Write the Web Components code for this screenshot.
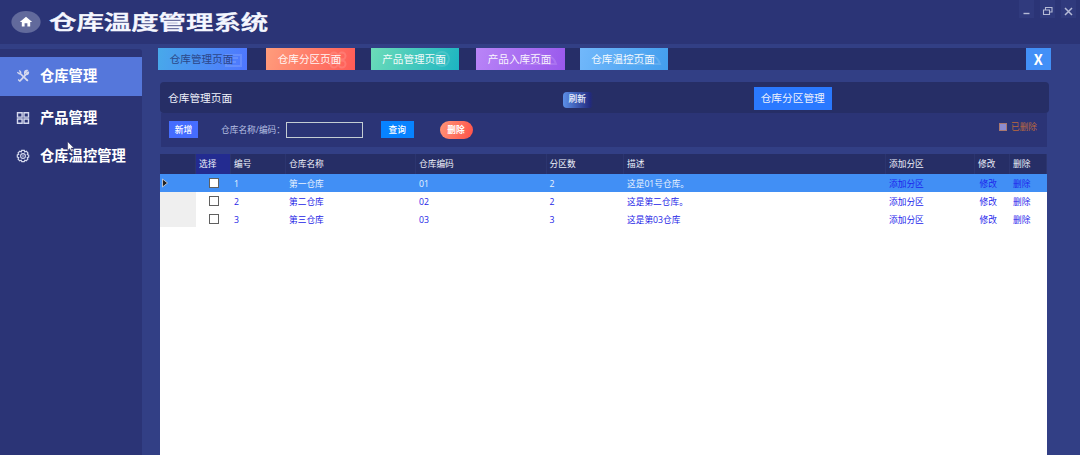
<!DOCTYPE html>
<html>
<head>
<meta charset="utf-8">
<title>仓库温度管理系统</title>
<style>
    html, body {
        margin: 0;
        height: 100%;
        overflow: hidden;
    }

    body {
        background: #323f85;
        font-family: "Open Sans", "Noto Sans CJK SC", sans-serif;
        font-size: 8.7px;
        color: #fff;
        cursor: default;
    }
</style>
</head>
<body>
<warehouse-app></warehouse-app>

<script>
const ICONS = {
    tools: `<g stroke-width="1.7" stroke-linecap="round"><path d="M4.6 4.8 11 11.2M9.4 6.2 4 11.8"/></g>
        <path d="M1.3 3.2 3.3 4.8 4.8 3.3 3.3 1.3M12.4 2.6 10.8 4.4 9.5 3.2 11.2 1.5Q8.8 1 8.6 3.3L8.7 5.2 10.7 5.5Q12.9 5 12.4 2.6M10.3 10.3 12 12M2.2 10.5 3.8 12.2" stroke-width="1.3"/>`,
    grid: `<path d="M1.5 1.8H6.1V6.1H1.5ZM8 1.8H12.5V6.1H8ZM1.5 8H6.1V12.2H1.5ZM8 8H12.5V12.2H8Z" stroke-width="1.4"/>`,
    gear: `<path d="M5.7 1.4H8.3L8.8 2.9 10.4 2.3 12 4 11.3 5.5 12.7 6.1V8L11.3 8.6 11.9 10.2 10.2 11.8 8.8 11.2 8.2 12.7H5.8L5.2 11.2 3.7 11.8 2.1 10.1 2.7 8.6 1.3 8V6L2.7 5.4 2.1 3.9 3.8 2.3 5.2 2.9Z" stroke-width="1.2"/>
        <circle cx="7" cy="7" r="2.4" stroke-width="1.1"/><circle cx="7" cy="7" r=".8" fill="currentColor" stroke="none"/>`
};

// Top bar with the logo, the system title and the window controls
class AppHeader extends HTMLElement {
    connectedCallback() {
        const shadow = this.attachShadow({mode: "open"});
        shadow.innerHTML = `
            <style>
                :host {
                    display: flex;
                    height: 44px;
                    box-sizing: border-box;
                    padding-left: 11px;
                    background: #2b3476;
                }

                .logo {
                    width: 30px;
                    height: 22px;
                    margin-top: 11px;
                }

                h1 {
                    margin: 6px auto 0 8px;
                    font: 500 20px/31px "Noto Sans CJK SC", sans-serif;
                    -webkit-text-stroke: .5px #f5f7ff;
                    color: #f5f7ff;
                    transform: scaleX(1.37);
                    transform-origin: left;
                }

                .controls {
                    display: flex;
                    gap: 6px;
                    padding-right: 4px;
                }

                .controls svg {
                    width: 15px;
                    height: 18px;
                    background: #303a7d;
                    fill: none;
                    stroke: #b5bad6;
                }
            </style>

            <svg class="logo" viewBox="0 0 30 22">
                <ellipse cx="15" cy="11" rx="14.6" ry="11" fill="#626a9c"/>
                <path d="M15 5.8 8.8 11H10.8V15.6H13.6V12.2H16.4V15.6H19.2V11H21.2Z" fill="#fff"/>
            </svg>
            <h1><slot></slot></h1>
            <div class="controls">
                <svg viewBox="0 0 15 18"><path d="M4.5 13.5H10.5" stroke-width="1.4"/></svg>
                <svg viewBox="0 0 15 18"><path d="M3.5 10H9.5V14.5H3.5ZM5.5 10V7.5H12V12H9.5" stroke-width="1.1"/></svg>
                <svg viewBox="0 0 15 18"><path d="M4 8 11 15M11 8 4 15" stroke-width="1.5"/></svg>
            </div>
        `;
    }
}

class NavItem extends HTMLElement {
    connectedCallback() {
        const shadow = this.attachShadow({mode: "open"});
        shadow.innerHTML = `
            <style>
                :host {
                    display: flex;
                    align-items: center;
                    height: 39px;
                    padding-left: 16px;
                    gap: 10px;
                    font: bold 14.3px/36px "Noto Sans CJK SC", sans-serif;
                    white-space: nowrap;
                }

                :host([active]) {
                    background: #5577db;
                }

                svg {
                    width: 14px;
                    height: 14px;
                    margin-bottom: 2px;
                    fill: none;
                    stroke: currentColor;
                    color: #d5d9ee;
                }

                span {
                    height: 39px;
                }
            </style>
            <svg viewBox="0 0 14 14">${ICONS[this.getAttribute("icon")]}</svg>
            <span><slot></slot></span>
        `;
    }
}

class SideNav extends HTMLElement {
    connectedCallback() {
        const shadow = this.attachShadow({mode: "open"});
        shadow.innerHTML = `
            <style>
                :host {
                    display: flex;
                    flex-direction: column;
                    position: relative;
                    box-sizing: border-box;
                    padding-top: 8px;
                    background: #2b3476;
                    border-radius: 0 3px 0 0;
                }

                nav-item:nth-of-type(2) {
                    margin-top: 3px;
                }

                nav-item:nth-of-type(3) {
                    margin-top: -1px;
                }

                .pointer {
                    position: absolute;
                    left: 67px;
                    top: 92px;
                    width: 8px;
                    height: 12px;
                }
            </style>
            <nav-item icon="tools" active>仓库管理</nav-item>
            <nav-item icon="grid">产品管理</nav-item>
            <nav-item icon="gear">仓库温控管理</nav-item>
            <svg class="pointer" viewBox="0 0 8 12"><path d="M.6.5V9.5L2.7 7.7 4.2 11 5.5 10.4 4.1 7.1H7Z" fill="#fff" stroke="#1c2350" stroke-width=".5"/></svg>
        `;
    }
}

class PageTab extends HTMLElement {
    connectedCallback() {
        const shadow = this.attachShadow({mode: "open"});
        const marks = {
            card: `<path d="M68 7H83V18H68ZM72 10H80M72 14H78"/>`,
            flower: `<circle cx="68" cy="8" r="3.5"/><circle cx="76" cy="8" r="3.5"/><circle cx="68" cy="16" r="3.5"/><circle cx="76" cy="16" r="3.5"/>`,
            ring: `<circle cx="71" cy="11" r="7"/><circle cx="71" cy="11" r="3"/>`,
            cloud: `<path d="M48 16Q50 7 57 10 62 2 68 9 77 6 80 16Z"/>`
        };
        shadow.innerHTML = `
            <style>
                :host {
                    display: block;
                    position: relative;
                    width: 88.5px;
                    height: 22.5px;
                    font-size: 10.6px;
                    line-height: 23px;
                    text-align: center;
                    color: #fff;
                }

                :host([active]) {
                    color: #29417f;
                }

                svg {
                    position: absolute;
                    inset: 0;
                    fill: none;
                    stroke: #fff;
                    stroke-width: 2;
                    opacity: .13;
                }

                span {
                    display: block;
                    position: relative;
                    padding-right: 1.5px;
                    opacity: .93;
                }
            </style>
            <svg viewBox="0 0 88.5 22.5">${marks[this.getAttribute("mark")]}</svg>
            <span><slot></slot></span>
        `;
    }
}

class TabStrip extends HTMLElement {
    connectedCallback() {
        const shadow = this.attachShadow({mode: "open"});
        shadow.innerHTML = `
            <style>
                :host {
                    display: flex;
                    height: 22.5px;
                    background: #262e68;
                }

                .blue { background: linear-gradient(100deg, #48a9ea, #4f76ff); margin-right: 19.5px; }
                .coral { background: linear-gradient(110deg, #ff9d7c, #ff5b56); margin-right: 16px; }
                .green { background: linear-gradient(110deg, #6cdcb8, #1cb4c2); margin-right: 17px; }
                .violet { background: linear-gradient(110deg, #b985f7, #9958ec); margin-right: 15px; }
                .sky { background: linear-gradient(110deg, #72b8fb, #429eed); }

                .close {
                    width: 24.5px;
                    margin-left: auto;
                    background: #4290f7;
                    font: bold 14.5px/22px "Noto Sans CJK SC", sans-serif;
                    text-align: center;
                }
            </style>
            <page-tab class="blue" mark="card" active>仓库管理页面</page-tab>
            <page-tab class="coral" mark="flower">仓库分区页面</page-tab>
            <page-tab class="green" mark="ring">产品管理页面</page-tab>
            <page-tab class="violet" mark="cloud">产品入库页面</page-tab>
            <page-tab class="sky" mark="cloud">仓库温控页面</page-tab>
            <div class="close">X</div>
        `;
    }
}

// Page title row and the search/action row below it
class PageTools extends HTMLElement {
    connectedCallback() {
        const shadow = this.attachShadow({mode: "open"});
        shadow.innerHTML = `
            <style>
                :host {
                    display: block;
                }

                .head, .tools {
                    display: flex;
                    box-sizing: border-box;
                    white-space: nowrap;
                }

                .head {
                    height: 31px;
                    padding: 0 0 0 8.5px;
                    border-radius: 4px;
                    background: #262e66;
                    font-size: 10.7px;
                    line-height: 32px;
                    color: #f0f2fb;
                }

                .title {
                    width: 394.5px;
                }

                .refresh {
                    width: 30px;
                    height: 16.5px;
                    margin-top: 9.5px;
                    padding-left: 6px;
                    box-sizing: border-box;
                    border-radius: 4px;
                    background: linear-gradient(90deg, #5c90e8, #222a80 90%, #262e66);
                    font-size: 8.7px;
                    font-weight: 500;
                    line-height: 15px;
                }

                .partition {
                    width: 77.5px;
                    height: 22.5px;
                    margin: 5px 0 0 161.5px;
                    background: #2a79ff;
                    line-height: 23.5px;
                    text-align: center;
                }

                .tools {
                    height: 34px;
                    margin: 0 2px 0 1px;
                    padding: 7.5px 10px 0 8.5px;
                    background: #2b3476;
                    line-height: 19px;
                }

                .btn {
                    height: 17px;
                    text-align: center;
                    font-weight: 500;
                }

                .add { width: 29px; background: #456dff; }
                .find { width: 32.5px; margin-left: 18px; background: #0783ff; }
                .remove {
                    width: 33px;
                    height: 18px;
                    margin-left: 26px;
                    border-radius: 9px;
                    background: linear-gradient(110deg, #ff9578, #ff5148);
                    font-weight: 700;
                    line-height: 18px;
                }

                label {
                    width: 65px;
                    margin-left: 23px;
                    color: #b8c0e4;
                }

                .input {
                    width: 77px;
                    height: 16px;
                    margin-top: 1.5px;
                    box-sizing: border-box;
                    border: 1px solid #c4cdd3;
                }

                .deleted {
                    display: flex;
                    margin-left: auto;
                    gap: 4px;
                    color: #bb693d;
                    line-height: 13px;
                }

                .deleted i {
                    width: 8px;
                    height: 8px;
                    margin-top: 2px;
                    box-sizing: border-box;
                    border: 1px solid #a97870;
                    background: #8b8bd0;
                }
            </style>
            <div class="head">
                <div class="title">仓库管理页面</div>
                <div class="refresh">刷新</div>
                <div class="partition">仓库分区管理</div>
            </div>
            <div class="tools">
                <div class="btn add">新增</div>
                <label>仓库名称/编码：</label>
                <div class="input"></div>
                <div class="btn find">查询</div>
                <div class="btn remove">删除</div>
                <div class="deleted"><i></i>已删除</div>
            </div>
        `;
    }
}

class WarehouseGrid extends HTMLElement {
    connectedCallback() {
        const shadow = this.attachShadow({mode: "open"});
        const heads = ["", "选择", "编号", "仓库名称", "仓库编码", "分区数", "描述", "添加分区", "修改", "删除"];
        const rows = [
            ["1", "第一仓库", "01", "2", "这是01号仓库。"],
            ["2", "第二仓库", "02", "2", "这是第二仓库。"],
            ["3", "第三仓库", "03", "3", "这是第03仓库"]
        ];

        shadow.innerHTML = `
            <style>
                :host {
                    display: block;
                    background: #fff;
                }

                .row {
                    display: grid;
                    grid-template-columns: 36px 35px 55px 130px 130.5px 77.5px 262px 89px 35px 37px;
                    grid-template-rows: 100%;
                    height: 17.8px;
                    line-height: 20.5px;
                    color: #2424e6;
                    white-space: nowrap;
                }

                .row > * {
                    padding-left: 3px;
                }

                .head {
                    height: 20.5px;
                    line-height: 20px;
                    background: #262e66;
                    color: #f0f2fb;
                }

                .head > * {
                    box-shadow: inset -1px 0 #2c356f;
                }

                .head > :nth-child(2) {
                    background: #232b90;
                }

                .marker {
                    background: #efefef;
                }

                .current, .current .marker {
                    background: #418ff5;
                }

                .current {
                    color: #eaf3ff;
                }

                .link {
                    color: #1d25ec;
                }

                .link.edit {
                    padding-left: 4.5px;
                }

                .row > .check {
                    width: 10px;
                    height: 10px;
                    margin: 4px 0 0 13px;
                    padding: 0;
                    box-sizing: border-box;
                    border: 1px solid #606060;
                    background: #fff;
                }

                .marker svg {
                    display: block;
                    width: 6px;
                    height: 10px;
                    margin: 4px 0 0 -1px;
                }
            </style>
            <div class="row head">${heads.map(h => `<div>${h}</div>`).join("")}</div>
            ${rows.map((r, i) => `
                <div class="row ${i === 0 ? "current" : ""}">
                    <div class="marker">${i === 0 ? `<svg viewBox="0 0 6 10"><path d="M.5 1 5.5 5 .5 9Z" fill="#222" stroke="#d8d8d8" stroke-width=".8"/></svg>` : ""}</div>
                    <div class="check"></div>
                    ${r.map(c => `<div>${c}</div>`).join("")}
                    <div class="link">添加分区</div>
                    <div class="link edit">修改</div>
                    <div class="link">删除</div>
                </div>
            `).join("")}
        `;
    }
}

class WarehouseApp extends HTMLElement {
    connectedCallback() {
        const shadow = this.attachShadow({mode: "open"});
        shadow.innerHTML = `
            <style>
                :host {
                    display: flex;
                    flex-direction: column;
                    height: 100vh;
                }

                .body {
                    display: flex;
                    flex: 1;
                    min-height: 0;
                }

                side-nav {
                    width: 141.5px;
                    margin-top: 5px;
                }

                main {
                    display: flex;
                    flex: 1;
                    flex-direction: column;
                    padding: 3.5px 29.5px 0 16.5px;
                }

                page-tools {
                    margin: 12px 1.5px 0 1.5px;
                }

                warehouse-grid {
                    flex: 1;
                    margin: 6.5px 3.5px 0 2px;
                }
            </style>
            <app-header>仓库温度管理系统</app-header>
            <div class="body">
                <side-nav></side-nav>
                <main>
                    <tab-strip></tab-strip>
                    <page-tools></page-tools>
                    <warehouse-grid></warehouse-grid>
                </main>
            </div>
        `;
    }
}

customElements.define("app-header", AppHeader);
customElements.define("nav-item", NavItem);
customElements.define("side-nav", SideNav);
customElements.define("page-tab", PageTab);
customElements.define("tab-strip", TabStrip);
customElements.define("page-tools", PageTools);
customElements.define("warehouse-grid", WarehouseGrid);
customElements.define("warehouse-app", WarehouseApp);
</script>
</body>
</html>
